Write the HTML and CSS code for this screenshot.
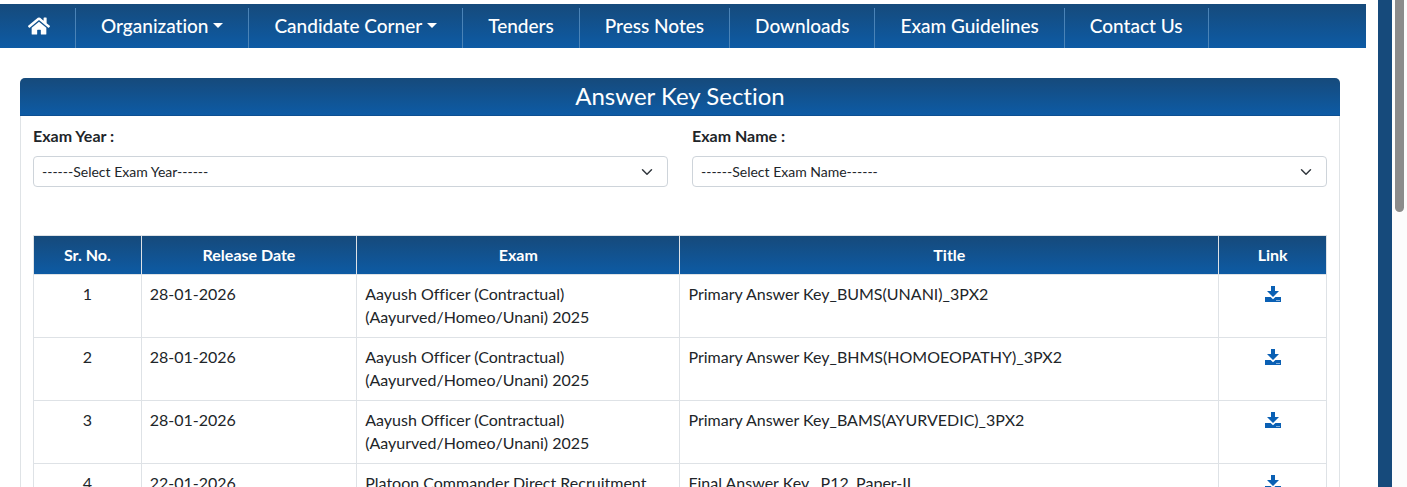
FILE: index.html
```html
<!DOCTYPE html>
<html lang="en">
<head>
  <meta charset="UTF-8" />
  <meta name="viewport" content="width=device-width, initial-scale=1.0"/>
  <title>Answer Key Section</title>
  <link rel="stylesheet" href="styles.css">
</head>
<body>

  <svg class="icon-defs" aria-hidden="true">
    <symbol id="icon-home" viewBox="0 0 576 512">
      <path d="M280.4 148.3 96 300.1V464a16 16 0 0 0 16 16l112-.3a16 16 0 0 0 16-16V368a16 16 0 0 1 16-16h64a16 16 0 0 1 16 16v95.6a16 16 0 0 0 16 16.1L464 480a16 16 0 0 0 16-16V300L295.7 148.3a12.200 12.200 0 0 0-15.300 0zM571.600 251.500 488 182.600V44a12 12 0 0 0-12-12h-56a12 12 0 0 0-12 12v72.600L318.500 43a48 48 0 0 0-61 0L4.300 251.500a12 12 0 0 0-1.600 16.900l25.500 31A12 12 0 0 0 45.200 301l235.200-193.700a12.200 12.200 0 0 1 15.300 0L530.900 301a12 12 0 0 0 16.900-1.600l25.500-31a12 12 0 0 0-1.700-16.900z"/>
    </symbol>
    <symbol id="icon-download" viewBox="0 0 16 16">
      <path d="M6 0h4v5h4L8 11 2 5h4z"/>
      <path d="M0 11h5.600L8 13.200l2.400-2.200H16v5H0z"/>
      <path class="tray-light" d="M11.500 14h1v1h-1zM13.500 14h1v1h-1z"/>
    </symbol>
  </svg>

  <main class="page">
    <nav class="navbar">
      <a href="#" class="nav-link" aria-label="Home"><svg class="home-icon"><use href="#icon-home"/></svg></a>
      <a href="#" class="nav-link dropdown">Organization</a>
      <a href="#" class="nav-link dropdown">Candidate Corner</a>
      <a href="#" class="nav-link">Tenders</a>
      <a href="#" class="nav-link">Press Notes</a>
      <a href="#" class="nav-link">Downloads</a>
      <a href="#" class="nav-link">Exam Guidelines</a>
      <a href="#" class="nav-link">Contact Us</a>
    </nav>

    <section class="card">
      <h1 class="card-header">Answer Key Section</h1>
      <div class="card-body">
        <form class="filters">
          <div class="field">
            <label for="examYear">Exam Year :</label>
            <select id="examYear">
              <option>------Select Exam Year------</option>
            </select>
          </div>
          <div class="field">
            <label for="examName">Exam Name :</label>
            <select id="examName">
              <option>------Select Exam Name------</option>
            </select>
          </div>
        </form>

        <table class="results">
          <colgroup>
            <col class="col-1"><col class="col-2"><col class="col-3"><col class="col-5"><col class="col-1">
          </colgroup>
          <thead>
            <tr>
              <th>Sr. No.</th>
              <th>Release Date</th>
              <th>Exam</th>
              <th>Title</th>
              <th>Link</th>
            </tr>
          </thead>
          <tbody>
            <tr>
              <td class="center">1</td>
              <td>28-01-2026</td>
              <td>Aayush Officer (Contractual) (Aayurved/Homeo/Unani) 2025</td>
              <td>Primary Answer Key_BUMS(UNANI)_3PX2</td>
              <td class="center"><a href="#" aria-label="Download"><svg class="download-icon"><use href="#icon-download"/></svg></a></td>
            </tr>
            <tr>
              <td class="center">2</td>
              <td>28-01-2026</td>
              <td>Aayush Officer (Contractual) (Aayurved/Homeo/Unani) 2025</td>
              <td>Primary Answer Key_BHMS(HOMOEOPATHY)_3PX2</td>
              <td class="center"><a href="#" aria-label="Download"><svg class="download-icon"><use href="#icon-download"/></svg></a></td>
            </tr>
            <tr>
              <td class="center">3</td>
              <td>28-01-2026</td>
              <td>Aayush Officer (Contractual) (Aayurved/Homeo/Unani) 2025</td>
              <td>Primary Answer Key_BAMS(AYURVEDIC)_3PX2</td>
              <td class="center"><a href="#" aria-label="Download"><svg class="download-icon"><use href="#icon-download"/></svg></a></td>
            </tr>
            <tr>
              <td class="center">4</td>
              <td>22-01-2026</td>
              <td>Platoon Commander Direct Recruitment</td>
              <td>Final Answer Key_ P12_Paper-II</td>
              <td class="center"><a href="#" aria-label="Download"><svg class="download-icon"><use href="#icon-download"/></svg></a></td>
            </tr>
          </tbody>
        </table>
      </div>
    </section>
  </main>

  <div class="scroll-track"><div class="scroll-thumb"></div></div>

</body>
</html>
```
FILE: styles.css
```css
* {
  box-sizing: border-box;
}

body {
  font-family: Lato, sans-serif;
  font-size: 16px;
  font-variant-ligatures: none;
  line-height: 23px;
  color: #212529;
  background: #fff;
  margin: 0;
  display: flex;
  height: 100vh;
  overflow: hidden;
}

.icon-defs {
  display: none;
}

.page {
  flex: 1;
  min-width: 0;
  padding: 4px 12px 0 0;
  border-right: 14px solid #164a7b;
}

.navbar,
.card-header,
.results thead tr {
  background: linear-gradient(#164a7b, #0d5ba5);
  color: #fff;
}

.navbar {
  display: flex;
  padding: 4px 0 0 3px;
}

.nav-link {
  display: flex;
  align-items: center;
  height: 40px;
  padding: 0 25px 5px;
  border-right: 1px solid #4a83b7;
  color: #fff;
  font-size: 19px;
  font-weight: 500;
  text-decoration: none;
  white-space: nowrap;
}

.nav-link:hover {
  background: #164a7b;
}

.dropdown::after {
  content: "";
  margin-left: 5px;
  border-top: 5px solid;
  border-left: 5px solid transparent;
  border-right: 5px solid transparent;
}

.home-icon {
  width: 22px;
  height: 20px;
  fill: currentColor;
}

.card {
  margin: 30px 26px 0 20px;
  border: 1px solid #dfe3e6;
  border-top: none;
  border-radius: 5px 5px 0 0;
}

.card-header {
  margin: 0 -1px;
  height: 38px;
  border-bottom: 1px solid #0d4f91;
  border-radius: 5px 5px 0 0;
  font-size: 24px;
  font-weight: 400;
  line-height: 36px;
  text-align: center;
}

.card-body {
  padding: 8px 12px 12px;
}

.filters {
  display: flex;
  gap: 24px;
  margin-bottom: 48px;
}

.field {
  flex: 1;
}

.field label {
  display: block;
  margin-bottom: 9px;
  font-weight: 700;
}

.field select {
  display: block;
  width: 100%;
  height: 31px;
  padding: 0 32px 0 8px;
  appearance: none;
  border: 1px solid #ced4da;
  border-radius: 4px;
  background: #fff url("data:image/svg+xml,%3Csvg xmlns='http://www.w3.org/2000/svg' viewBox='0 0 16 16'%3E%3Cpath fill='none' stroke='%23343a40' stroke-linecap='round' stroke-linejoin='round' stroke-width='2' d='m2 5 6 6 6-6'/%3E%3C/svg%3E") no-repeat right 14px center / 12px;
  color: #212529;
  font-family: inherit;
  font-size: 14px;
}

.results {
  width: 100%;
  table-layout: fixed;
  border-collapse: collapse;
}

.results .col-1 {
  width: calc(100% / 12);
}

.results .col-2 {
  width: calc(200% / 12);
}

.results .col-3 {
  width: calc(300% / 12);
}

.results .col-5 {
  width: calc(500% / 12);
}

.results th,
.results td {
  padding: 7px 8px 9px;
  border: 1px solid #dee2e6;
  vertical-align: top;
}

.results th {
  padding: 7px 8px 8px;
  font-weight: 700;
  text-align: center;
}

.results .center {
  text-align: center;
}

.download-icon {
  width: 16px;
  height: 16px;
  fill: #0a60b4;
  vertical-align: -2px;
}

.tray-light {
  fill: #fff;
}

.scroll-track {
  width: 15px;
  background: #fcfcfc;
}

.scroll-thumb {
  width: 9px;
  height: 212px;
  margin: 0 auto;
  border-radius: 0 0 5px 5px;
  background: #8b8b8b;
}
```
